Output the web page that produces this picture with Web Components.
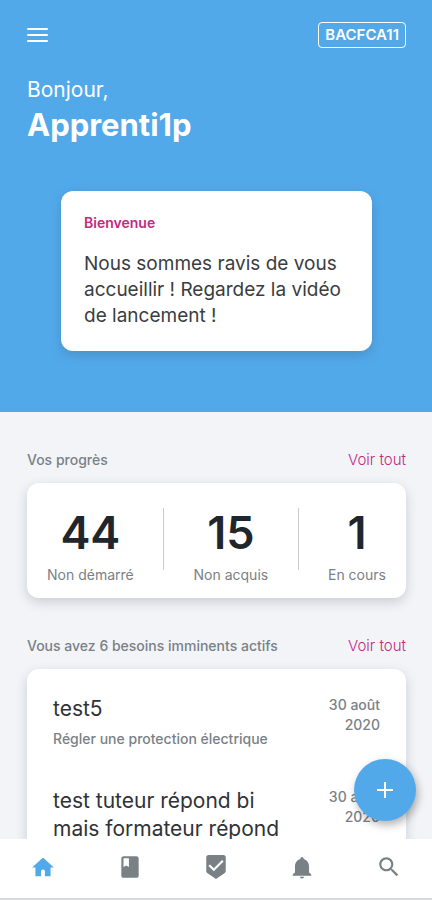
<!DOCTYPE html>
<html lang="fr">
<head>
<meta charset="utf-8">
<meta name="viewport" content="width=device-width, initial-scale=1">
<title>Accueil</title>
<style>
  body {
    margin: 0;
    font-family: Inter, "Liberation Sans", sans-serif;
    --blue: #52a9ea;
    --pink: #c5287f;
    --grey: #7a8186;
    --ink: #20262b;
    --shadow: 0 4px 12px rgba(40, 50, 60, 0.2);
  }
</style>
</head>
<body>
<app-shell>
  <app-hero code="BACFCA11" name="Apprenti1p">
    <welcome-card heading="Bienvenue">Nous sommes ravis de vous accueillir ! Regardez la vidéo de lancement !</welcome-card>
  </app-hero>
  <app-section heading="Vos progrès">
    <stat-row>
      <stat-item label="Non démarré">44</stat-item>
      <stat-item label="Non acquis">15</stat-item>
      <stat-item label="En cours">1</stat-item>
    </stat-row>
  </app-section>
  <app-section heading="Vous avez 6 besoins imminents actifs">
    <need-list>
      <need-item date="30 août 2020" detail="Régler une protection électrique">test5</need-item>
      <need-item date="30 août 2020" detail="Régler une protection électrique">test tuteur répond bi mais formateur répond</need-item>
    </need-list>
  </app-section>
  <add-button slot="action"></add-button>
  <tab-bar slot="tabs"></tab-bar>
</app-shell>

<script>
const attach = (el, html) => {
  const template = document.createElement("template");
  template.innerHTML = html;
  el.attachShadow({ mode: "open" }).appendChild(template.content.cloneNode(true));
};

class AppShell extends HTMLElement {
  constructor() {
    super();
    attach(this, `
      <style>
        :host {
          display: flex;
          flex-direction: column;
          height: 100vh;
          background: #f2f4f8;
        }
        .view {
          position: relative;
          flex: 1;
          min-height: 0;
          display: flex;
        }
        main {
          flex: 1;
          min-width: 0;
          overflow-y: auto;
          scrollbar-width: none;
        }
      </style>
      <div class="view">
        <main><slot></slot></main>
        <slot name="action"></slot>
      </div>
      <slot name="tabs"></slot>
    `);
  }
}

class AppHero extends HTMLElement {
  constructor() {
    super();
    attach(this, `
      <style>
        :host {
          display: block;
          padding: 22px 26px 61px 27px;
          background: var(--blue);
          color: #fff;
        }
        .top {
          display: flex;
          align-items: center;
          justify-content: space-between;
        }
        button {
          display: flex;
          padding: 0;
          border: 0;
          background: none;
          color: inherit;
        }
        .code {
          padding: 0 6px;
          border: 1px solid #fff;
          border-radius: 4px;
          font-size: 15px;
          font-weight: 600;
          line-height: 24px;
        }
        p {
          margin: 28px 0 0;
          font-size: 21px;
          line-height: 28px;
        }
        h1 {
          margin: 1px 0 0;
          font-size: 31px;
          font-weight: 700;
          line-height: 40px;
        }
        .card {
          padding: 46px 34px 0;
        }
      </style>
      <div class="top">
        <button type="button" aria-label="Menu">
          <svg width="21" height="16" viewBox="0 0 21 16" fill="none" stroke="currentColor" stroke-width="2" stroke-linecap="round"><path d="M1 2h19M1 8h19M1 14h19"/></svg>
        </button>
        <span class="code"></span>
      </div>
      <p>Bonjour,</p>
      <h1></h1>
      <div class="card"><slot></slot></div>
    `);
  }

  connectedCallback() {
    this.shadowRoot.querySelector(".code").textContent = this.getAttribute("code");
    this.shadowRoot.querySelector("h1").textContent = this.getAttribute("name");
  }
}

class WelcomeCard extends HTMLElement {
  constructor() {
    super();
    attach(this, `
      <style>
        :host {
          display: block;
          padding: 22px 23px;
          border-radius: 12px;
          background: #fff;
          box-shadow: var(--shadow);
          color: #3a3d40;
        }
        h2 {
          margin: 0 0 18px;
          color: var(--pink);
          font-size: 14px;
          font-weight: 600;
          line-height: 20px;
        }
        p {
          margin: 0;
          font-size: 19px;
          line-height: 26px;
        }
      </style>
      <h2></h2>
      <p><slot></slot></p>
    `);
  }

  connectedCallback() {
    this.shadowRoot.querySelector("h2").textContent = this.getAttribute("heading");
  }
}

class AppSection extends HTMLElement {
  constructor() {
    super();
    attach(this, `
      <style>
        :host {
          display: block;
          padding: 38px 26px 0 27px;
        }
        header {
          display: flex;
          align-items: center;
          justify-content: space-between;
          margin-bottom: 13px;
          font-size: 14px;
          line-height: 20px;
        }
        h2 {
          margin: 0;
          color: var(--grey);
          font-size: inherit;
          font-weight: 500;
        }
        a {
          color: var(--pink);
          font-size: 15px;
          font-weight: 300;
          text-decoration: none;
        }
      </style>
      <header>
        <h2></h2>
        <a href="#">Voir tout</a>
      </header>
      <slot></slot>
    `);
  }

  connectedCallback() {
    this.shadowRoot.querySelector("h2").textContent = this.getAttribute("heading");
  }
}

class StatRow extends HTMLElement {
  constructor() {
    super();
    attach(this, `
      <style>
        :host {
          display: flex;
          justify-content: space-between;
          padding: 25px 20px 13px;
          border-radius: 12px;
          background: #fff;
          box-shadow: var(--shadow);
        }
      </style>
      <slot></slot>
    `);
  }

  // a thin rule stands between each pair of figures
  connectedCallback() {
    const slot = this.shadowRoot.querySelector("slot");
    slot.remove();
    [...this.children].forEach((item, i) => {
      if (i > 0) {
        const rule = document.createElement("div");
        rule.style.cssText = "width: 1px; height: 62px; background: #c9cccf";
        this.shadowRoot.appendChild(rule);
      }
      item.slot = "stat-" + i;
      const place = document.createElement("slot");
      place.name = item.slot;
      this.shadowRoot.appendChild(place);
    });
  }
}

class StatItem extends HTMLElement {
  constructor() {
    super();
    attach(this, `
      <style>
        :host {
          display: flex;
          flex-direction: column;
          align-items: center;
        }
        strong {
          color: var(--ink);
          font-size: 45px;
          font-weight: 600;
          line-height: 50px;
        }
        span {
          margin-top: 7px;
          color: var(--grey);
          font-size: 14px;
          line-height: 20px;
        }
      </style>
      <strong><slot></slot></strong>
      <span></span>
    `);
  }

  connectedCallback() {
    this.shadowRoot.querySelector("span").textContent = this.getAttribute("label");
  }
}

class NeedList extends HTMLElement {
  constructor() {
    super();
    attach(this, `
      <style>
        :host {
          display: flex;
          flex-direction: column;
          gap: 38px;
          padding: 26px;
          border-radius: 12px;
          background: #fff;
          box-shadow: var(--shadow);
        }
      </style>
      <slot></slot>
    `);
  }
}

class NeedItem extends HTMLElement {
  constructor() {
    super();
    attach(this, `
      <style>
        :host {
          display: flex;
          justify-content: space-between;
          gap: 24px;
        }
        .text {
          flex: 1;
        }
        h3 {
          margin: 0 0 6px;
          color: #303336;
          font-size: 21px;
          font-weight: 400;
          line-height: 28px;
        }
        p, time {
          margin: 0;
          color: var(--grey);
          font-size: 14px;
          font-weight: 500;
          line-height: 20px;
        }
        time {
          width: 64px;
          text-align: right;
        }
      </style>
      <div class="text">
        <h3><slot></slot></h3>
        <p></p>
      </div>
      <time></time>
    `);
  }

  connectedCallback() {
    this.shadowRoot.querySelector("p").textContent = this.getAttribute("detail");
    this.shadowRoot.querySelector("time").textContent = this.getAttribute("date");
  }
}

class AddButton extends HTMLElement {
  constructor() {
    super();
    attach(this, `
      <style>
        :host {
          position: absolute;
          right: 16px;
          bottom: 18px;
        }
        button {
          display: flex;
          align-items: center;
          justify-content: center;
          width: 62px;
          height: 62px;
          padding: 0;
          border: 0;
          border-radius: 50%;
          background: var(--blue);
          box-shadow: 2px 4px 8px rgba(0, 0, 0, 0.3);
          color: #fff;
        }
      </style>
      <button type="button" aria-label="Ajouter">
        <svg width="16" height="16" viewBox="0 0 16 16" fill="none" stroke="currentColor" stroke-width="2"><path d="M8 0v16M0 8h16"/></svg>
      </button>
    `);
  }
}

class TabBar extends HTMLElement {
  constructor() {
    super();
    attach(this, `
      <style>
        :host {
          display: block;
          border-bottom: 2px solid #d9dadb;
          background: #fff;
        }
        nav {
          display: flex;
        }
        a {
          display: flex;
          flex: 1;
          justify-content: center;
          padding: 15px 0 18px;
          color: var(--grey);
        }
        a.on {
          color: var(--blue);
        }
        svg {
          width: 26px;
          height: 26px;
          fill: currentColor;
        }
      </style>
      <nav>
        <a class="on" href="#" aria-label="Accueil"><svg viewBox="0 0 24 24"><path d="M10.200 20.500v-4.500a1.800 1.800 0 0 1 3.600 0v4.500h5.200v-8h3L12.500 3.700h-1L2 12.500h3v8z"/></svg></a>
        <a href="#" aria-label="Livret"><svg viewBox="0 0 24 24"><path fill-rule="evenodd" d="M18 2H6c-1.100 0-2 .9-2 2v16c0 1.100.9 2 2 2h12c1.100 0 2-.9 2-2V4c0-1.100-.9-2-2-2zM6 4h5v8l-2.500-1.500L6 12V4z"/></svg></a>
        <a href="#" aria-label="Validations"><svg viewBox="0 0 24 24"><path fill-rule="evenodd" d="M19 1H5c-1.100 0-1.990.9-1.990 2L3 15.930c0 .69.350 1.300.880 1.660L12 23l8.110-5.410c.53-.36.880-.97.880-1.660L21 3c0-1.100-.9-2-2-2zm-9 15l-5-5 1.410-1.410L10 13.170l7.590-7.590L19 7l-9 9z"/></svg></a>
        <a href="#" aria-label="Notifications"><svg viewBox="0 0 24 24"><path d="M12 22.500c1.100 0 2-.7 2-1.500h-4c0 .8.890 1.500 2 1.500zM18.500 17v-5.500c0-3.300-1.900-6-5-6.900V4.200c0-.830-.670-1.500-1.500-1.500s-1.500.670-1.500 1.500v.4c-3.100.9-5 3.600-5 6.900V17L3.500 18.800v1.200h17v-1.200z"/></svg></a>
        <a href="#" aria-label="Rechercher"><svg viewBox="0 0 24 24"><path d="M15.500 14h-.790l-.280-.270C15.410 12.590 16 11.110 16 9.500 16 5.910 13.090 3 9.500 3S3 5.910 3 9.500 5.910 16 9.500 16c1.610 0 3.090-.590 4.230-1.570l.270.280v.790l5 4.990L20.490 19l-4.990-5zm-6 0C7.010 14 5 11.990 5 9.500S7.010 5 9.500 5 14 7.010 14 9.500 11.990 14 9.500 14z"/></svg></a>
      </nav>
    `);
  }
}

customElements.define("app-shell", AppShell);
customElements.define("app-hero", AppHero);
customElements.define("welcome-card", WelcomeCard);
customElements.define("app-section", AppSection);
customElements.define("stat-row", StatRow);
customElements.define("stat-item", StatItem);
customElements.define("need-list", NeedList);
customElements.define("need-item", NeedItem);
customElements.define("add-button", AddButton);
customElements.define("tab-bar", TabBar);
</script>
</body>
</html>
